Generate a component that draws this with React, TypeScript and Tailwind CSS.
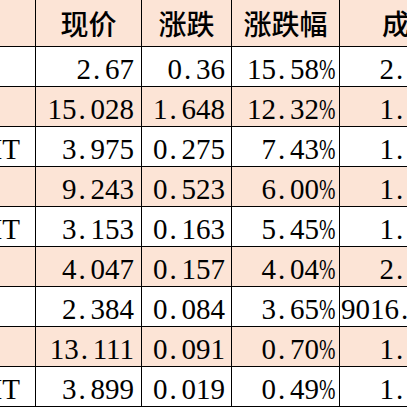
import React from "react";

type Row = {
  name: string;
  price: string;
  change: string;
  pct: string;
  volume: string;
  shaded: boolean;
};

const rows: Row[] = [
  { name: "", price: "2.67", change: "0.36", pct: "15.58%", volume: "2.14亿", shaded: false },
  { name: "", price: "15.028", change: "1.648", pct: "12.32%", volume: "1.83亿", shaded: true },
  { name: "IT", price: "3.975", change: "0.275", pct: "7.43%", volume: "1.27亿", shaded: false },
  { name: "", price: "9.243", change: "0.523", pct: "6.00%", volume: "1.56亿", shaded: true },
  { name: "IT", price: "3.153", change: "0.163", pct: "5.45%", volume: "1.09亿", shaded: false },
  { name: "", price: "4.047", change: "0.157", pct: "4.04%", volume: "2.31亿", shaded: true },
  { name: "", price: "2.384", change: "0.084", pct: "3.65%", volume: "9016.52万", shaded: false },
  { name: "", price: "13.111", change: "0.091", pct: "0.70%", volume: "1.42亿", shaded: true },
  { name: "IT", price: "3.899", change: "0.019", pct: "0.49%", volume: "1.18亿", shaded: false },
];

const serif = "font-['Liberation_Serif']";
const cjk = "font-['Noto_Sans_CJK_SC']";

// half-width period and percent sign, like a Song-style font in a spreadsheet
function Num({ value }: { value: string }) {
  return (
    <span className="whitespace-nowrap">
      {value.split("").map((ch, i) => {
        if (ch === ".")
          return (
            <span key={i} className="inline-block w-[14px] pl-[2px] text-left">
              .
            </span>
          );
        if (ch === "%")
          return (
            <span key={i} className="inline-block w-[16px] overflow-visible">
              <span className="inline-block origin-left scale-x-[0.68]">%</span>
            </span>
          );
        if (ch === "亿" || ch === "万")
          return (
            <span key={i} className={cjk}>
              {ch}
            </span>
          );
        return <span key={i}>{ch}</span>;
      })}
    </span>
  );
}

const cell = "border-r border-b border-black overflow-hidden flex";
const bodyCell = `${cell} h-[40px] items-end pb-[3px] leading-[28px] text-[29px] ${serif}`;
const headCell = `${cell} h-[47px] items-center justify-center text-[28px] font-medium leading-none ${cjk}`;

export default function App() {
  return (
    <div className="w-[407px] h-[407px] overflow-hidden bg-white text-black">
      <div className="grid w-[471px] grid-cols-[36px_106px_90px_108px_131px]">
        <div className={`${headCell} bg-[#fce4d6]`} />
        <div className={`${headCell} bg-[#fce4d6]`}>现价</div>
        <div className={`${headCell} bg-[#fce4d6]`}>涨跌</div>
        <div className={`${headCell} bg-[#fce4d6]`}>涨跌幅</div>
        <div className={`${headCell} bg-[#fce4d6] !justify-start pl-[42px]`}>成交额</div>

        {rows.map((r, i) => {
          const bg = r.shaded ? "bg-[#fce4d6]" : "bg-white";
          // too wide for the column: start at the left edge instead
          const volAlign = r.volume.length > 7 ? "justify-start pl-[1px]" : "justify-end pr-[4px]";
          return (
            <React.Fragment key={i}>
              <div className={`${bodyCell} ${bg} justify-end pr-[15px]`}>
                <span className="whitespace-nowrap">{r.name}</span>
              </div>
              <div className={`${bodyCell} ${bg} justify-end pr-[7px]`}>
                <Num value={r.price} />
              </div>
              <div className={`${bodyCell} ${bg} justify-end pr-[6px]`}>
                <Num value={r.change} />
              </div>
              <div className={`${bodyCell} ${bg} justify-end pr-[4px]`}>
                <Num value={r.pct} />
              </div>
              <div className={`${bodyCell} ${bg} ${volAlign}`}>
                <Num value={r.volume} />
              </div>
            </React.Fragment>
          );
        })}
      </div>
    </div>
  );
}
